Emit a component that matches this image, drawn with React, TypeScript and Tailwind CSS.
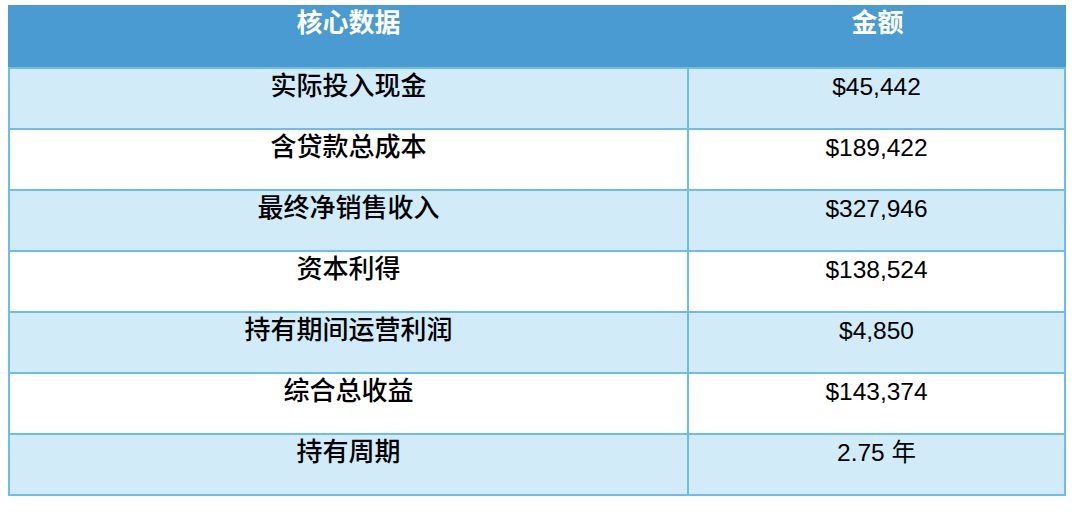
import React from "react"

const rows = [
  { label: "实际投入现金", value: "$45,442" },
  { label: "含贷款总成本", value: "$189,422" },
  { label: "最终净销售收入", value: "$327,946" },
  { label: "资本利得", value: "$138,524" },
  { label: "持有期间运营利润", value: "$4,850" },
  { label: "综合总收益", value: "$143,374" },
  { label: "持有周期", value: "2.75 年" },
]

const font = { fontFamily: '"Liberation Sans", "Noto Sans CJK SC", sans-serif' }

export default function App() {
  return (
    <div className="min-h-[512px] bg-white pt-[5px] pl-[8px]" style={font}>
      <div className="w-[1058px]">
        <div className="flex h-[62px] bg-[#4a9bd1] text-white font-semibold">
          <div className="w-[681px] pt-[3px] text-center text-[26px] leading-[30px]">核心数据</div>
          <div className="flex-1 pt-[3px] text-center text-[26px] leading-[30px]">金额</div>
        </div>
        {rows.map((r, i) => (
          <div
            key={r.label}
            className={
              "flex h-[61px] border-x-2 border-t-2 border-[#6cbde9] text-black " +
              (i % 2 === 0 ? "bg-[#d1ecf8]" : "bg-white") +
              (i === rows.length - 1 ? " border-b-2 h-[63px]" : "")
            }
          >
            <div className="w-[679px] border-r-2 border-[#6cbde9] pt-[2px] text-center text-[26px] leading-[30px] font-medium">
              {r.label}
            </div>
            <div className="flex-1 pt-[3px] text-center text-[24.5px] leading-[30px]">{r.value}</div>
          </div>
        ))}
      </div>
    </div>
  )
}
